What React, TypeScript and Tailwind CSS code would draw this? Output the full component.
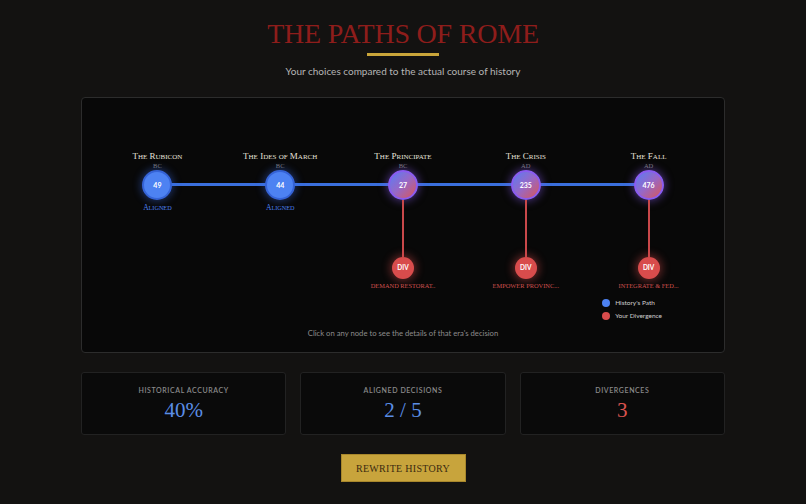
import React from "react";

type Era = {
  title: string;
  era: string;
  year: number;
  divergence?: string;
};

const eras: Era[] = [
  { title: "The Rubicon", era: "BC", year: 49 },
  { title: "The Ides of March", era: "BC", year: 44 },
  { title: "The Principate", era: "BC", year: 27, divergence: "Demand Restorat.." },
  { title: "The Crisis", era: "AD", year: 235, divergence: "Empower Provinc..." },
  { title: "The Fall", era: "AD", year: 476, divergence: "Integrate & Fed..." },
];

const serif = "font-['Liberation_Serif','DejaVu_Serif',serif]";
const sans = "font-['Lato','Noto_Sans',sans-serif]";

// Cinzel-like caps: capitals at full size, lowercase letters drawn as smaller capitals
function Caps({ text, small }: { text: string; small: string }) {
  const runs: { lower: boolean; s: string }[] = [];
  for (const ch of text) {
    const lower = ch !== ch.toUpperCase();
    const last = runs[runs.length - 1];
    if (last && last.lower === lower) last.s += ch;
    else runs.push({ lower, s: ch });
  }
  return (
    <>
      {runs.map((r, i) =>
        r.lower ? (
          <span key={i} className={small}>
            {r.s.toUpperCase()}
          </span>
        ) : (
          <React.Fragment key={i}>{r.s}</React.Fragment>
        )
      )}
    </>
  );
}

function EraNode({ item }: { item: Era }) {
  const diverged = !!item.divergence;
  return (
    <div className="relative z-10 flex flex-col items-center">
      <div className={`${serif} text-[9px] leading-[9px] text-[#e6e2da] whitespace-nowrap`}>
        <Caps text={item.title} small="text-[7px]" />
      </div>
      <div className={`${serif} text-[6.5px] leading-[8px] text-[#7a7a7a]`}>{item.era}</div>
      {diverged ? (
        <div className="flex h-[30px] w-[30px] items-center justify-center rounded-full border-2 border-[#8a5cf0] bg-[linear-gradient(135deg,#5a7cf4_0%,#9868c6_50%,#d85656_100%)] shadow-[0_0_8px_1px_rgba(139,92,246,0.5)]">
          <span className={`${sans} text-[7px] font-bold text-white`}>{item.year}</span>
        </div>
      ) : (
        <div className="flex h-[30px] w-[30px] items-center justify-center rounded-full border-2 border-[#3563d6] bg-[#4d82f2] shadow-[0_0_8px_1px_rgba(59,110,240,0.45)]">
          <span className={`${sans} text-[7px] font-bold text-white`}>{item.year}</span>
        </div>
      )}
      {diverged ? (
        <>
          <div className="h-[57px] w-[2px] bg-[#c9484a]" />
          <div className="flex h-[22px] w-[22px] items-center justify-center rounded-full bg-[#d84c4c] shadow-[0_0_8px_2px_rgba(216,76,76,0.45)]">
            <span className={`${sans} text-[6.5px] font-bold text-white`}>DIV</span>
          </div>
          <div className={`${serif} mt-[2px] text-[6.4px] leading-[10px] text-[#d0504e] whitespace-nowrap`}>
            {item.divergence!.toUpperCase()}
          </div>
        </>
      ) : (
        <div className={`${serif} mt-[3px] text-[7.5px] leading-[10px] text-[#4d82f2]`}>
          <Caps text="Aligned" small="text-[6.2px]" />
        </div>
      )}
    </div>
  );
}

function Stat({ label, value, color }: { label: string; value: string; color: string }) {
  return (
    <div className="flex flex-col items-center rounded-[3px] border border-[#222] bg-[#0a0a0a] pt-[12px] pb-[12px]">
      <div className={`${sans} text-[7px] font-semibold leading-[10px] tracking-[0.6px] text-[#8a8a8a]`}>{label}</div>
      <div className={`${serif} mt-[3px] text-[21px] leading-[24px] ${color}`}>{value}</div>
    </div>
  );
}

export default function App() {
  return (
    <div className="min-h-screen w-full bg-[#131211]">
      <div className="mx-auto flex w-[644px] flex-col items-center pt-[20px]">
        <h1 className={`${serif} text-[28px] leading-[28px] text-[#8e1d1b] tracking-[-0.2px]`}>
          THE PATHS OF ROME
        </h1>
        <div className="mt-[5px] h-[3px] w-[72px] bg-[#c9a53a]" />
        <p className={`${sans} mt-[9px] text-[10px] leading-[13px] text-[#b5b5b5]`}>
          Your choices compared to the actual course of history
        </p>

        <div className="mt-[19px] w-full rounded-[4px] border border-[#2c2c2c] bg-[#080808] pt-[54px] pb-[14px]">
          <div className="relative grid grid-cols-5 px-[14px]">
            <div className="absolute left-[calc(14px+10%-2.8px)] right-[calc(14px+10%-2.8px)] top-[30.5px] h-[3px] bg-[#3a6fdc]" />
            {eras.map((e) => (
              <EraNode key={e.title} item={e} />
            ))}
          </div>

          <div className="mt-[7px] flex justify-end pr-[62px]">
            <div className="flex flex-col gap-[3px]">
              <div className="flex items-center gap-[5px]">
                <span className="h-[8px] w-[8px] rounded-full bg-[#4d82f2]" />
                <span className={`${sans} text-[6.5px] leading-[10px] text-[#cfcfcf]`}>History's Path</span>
              </div>
              <div className="flex items-center gap-[5px]">
                <span className="h-[8px] w-[8px] rounded-full bg-[#d84c4c]" />
                <span className={`${sans} text-[6.5px] leading-[10px] text-[#cfcfcf]`}>Your Divergence</span>
              </div>
            </div>
          </div>

          <p className={`${sans} mt-[7px] text-center text-[7.7px] leading-[10px] text-[#8c8c8c]`}>
            Click on any node to see the details of that era's decision
          </p>
        </div>

        <div className="mt-[19px] grid w-full grid-cols-3 gap-[14px]">
          <Stat label="HISTORICAL ACCURACY" value="40%" color="text-[#5b8ee6]" />
          <Stat label="ALIGNED DECISIONS" value="2 / 5" color="text-[#5b8ee6]" />
          <Stat label="DIVERGENCES" value="3" color="text-[#d9534f]" />
        </div>

        <button
          className={`${serif} mt-[19px] h-[28px] w-[125px] border border-[#a8872c] bg-[#c8a43c] text-[10px] tracking-[0.3px] text-[#3a2a10]`}
        >
          REWRITE HISTORY
        </button>
      </div>
    </div>
  );
}
